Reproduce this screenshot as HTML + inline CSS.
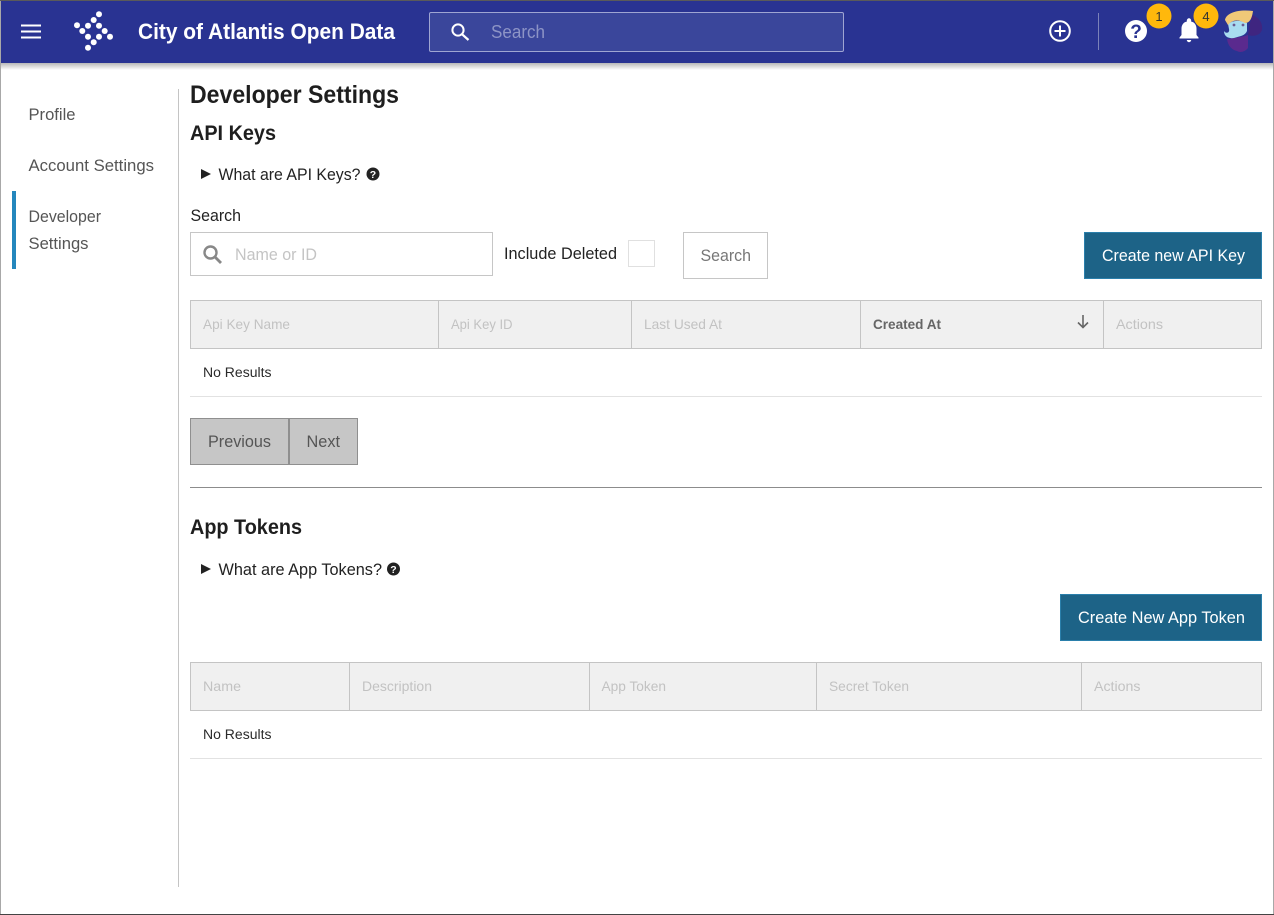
<!DOCTYPE html>
<html lang="en"><head><meta charset="utf-8"><title>Developer Settings</title>
<style>
html,body{margin:0;padding:0;background:#fff;width:1274px;height:915px;overflow:hidden}
svg{display:block}
text{font-family:"Liberation Sans",Arial,sans-serif}
.nav{font-size:17px;fill:#555}
.th{font-size:14px;fill:#c2c2c2}
.nr{font-size:13.5px;fill:#2a2a2a}
.b{font-weight:bold}
</style></head><body>
<svg width="1274" height="915" viewBox="0 0 1274 915" xmlns="http://www.w3.org/2000/svg">
<defs><linearGradient id="sh" x1="0" y1="0" x2="0" y2="1"><stop offset="0" stop-color="#000" stop-opacity=".28"/><stop offset="1" stop-color="#000" stop-opacity="0"/></linearGradient></defs>
<rect width="1274" height="915" fill="#fff"/>
<!-- page borders -->
<rect x="0" y="0" width="1" height="915" fill="#a8a8a8"/>
<rect x="1273" y="0" width="1" height="915" fill="#a8a8a8"/>
<rect x="0" y="914" width="1274" height="1" fill="#444"/>
<!-- header -->
<rect x="1" y="63" width="1272" height="7" fill="url(#sh)"/>
<rect x="1" y="1" width="1272" height="62" fill="#293392"/>
<rect x="0" y="0" width="1274" height="1" fill="#5a5a5a"/>
<g fill="#fff"><rect x="21" y="24.5" width="20" height="2"/><rect x="21" y="30.5" width="20" height="2"/><rect x="21" y="36.5" width="20" height="2"/></g>
<g fill="#fff"><circle cx="99" cy="14.3" r="3"/><circle cx="93.7" cy="20" r="3"/><circle cx="88" cy="25.7" r="3"/><circle cx="77" cy="25.3" r="3"/><circle cx="82.3" cy="31" r="3"/><circle cx="99" cy="25.7" r="3"/><circle cx="104.7" cy="31" r="3"/><circle cx="110" cy="36.7" r="3"/><circle cx="88" cy="36.7" r="3"/><circle cx="99" cy="36.7" r="3"/><circle cx="93.7" cy="42.3" r="3"/><circle cx="88" cy="47.7" r="3"/></g>
<text x="138" y="39" font-size="22" class="b" fill="#fff" textLength="257" lengthAdjust="spacingAndGlyphs">City of Atlantis Open Data</text>
<!-- search -->
<rect x="429.5" y="12.5" width="414" height="39" rx="1.5" fill="#3a469b" stroke="#9fa5d2"/>
<circle cx="458" cy="30" r="5.6" fill="none" stroke="#fff" stroke-width="2"/><path d="M462 34.2 L468.5 40" stroke="#fff" stroke-width="2.2" fill="none"/>
<text x="491" y="38" font-size="18" fill="#8d94c6" textLength="54" lengthAdjust="spacingAndGlyphs">Search</text>
<!-- right icons -->
<circle cx="1060" cy="31" r="9.8" fill="none" stroke="#fff" stroke-width="2"/><path d="M1060 25.5v11M1054.5 31h11" stroke="#fff" stroke-width="2" fill="none"/>
<rect x="1098" y="13" width="1" height="37" fill="#7b82b9"/>
<circle cx="1136" cy="31" r="11" fill="#fff"/>
<text x="1136" y="38" font-size="19" class="b" fill="#293392" text-anchor="middle">?</text>
<path d="M1179.5 37.5 L1181.5 35 V28.5 C1181.5 24.5 1184 22 1186.8 21.6 V20.5 a2.2 2.2 0 0 1 4.4 0 V21.6 C1194 22 1196.5 24.5 1196.5 28.5 V35 L1198.5 37.5 V38.5 H1179.5 Z" fill="#fff"/><path d="M1186.8 40 h4.4 a2.2 2.2 0 0 1 -4.4 0Z" fill="#fff"/>
<circle cx="1159" cy="16" r="12.5" fill="#ffb80c"/>
<text x="1159" y="21" font-size="13" fill="#333" text-anchor="middle">1</text>
<circle cx="1206" cy="16" r="12.5" fill="#ffb80c"/>
<text x="1206" y="21" font-size="13" fill="#333" text-anchor="middle">4</text>
<!-- avatar -->
<path d="M1252 15 C1258 17 1263 22 1262 30 C1260 35 1255 37 1248 35 L1250 23 Z" fill="#3f2580"/>
<path d="M1227 39 C1234 38 1242 37 1248 35 L1248 48 C1245 52 1240 53 1237 51 C1232 50 1228 46 1227 39Z" fill="#5a2a8e"/>
<path d="M1228 24 C1233 20 1240 20 1247 23 L1247 31 C1245 36 1240 36 1234 38 C1228 39 1224 36 1224 31 C1226 34 1230 33 1229 29 Z" fill="#a8dcf0"/>
<path d="M1225 20 C1226 13 1238 9 1253 11 C1252 18 1250 23 1245 23 C1238 19 1232 20 1228 25Z" fill="#f0c878"/>
<circle cx="1234" cy="25" r="1.4" fill="#6a5a90"/><circle cx="1243" cy="25" r="1.4" fill="#6a5a90"/>
<!-- sidebar -->
<rect x="178" y="89" width="1" height="798" fill="#c4c4c4"/>
<rect x="12" y="191" width="4" height="78" fill="#2487bd"/>
<text x="28.5" y="120" class="nav" textLength="47" lengthAdjust="spacingAndGlyphs">Profile</text>
<text x="28.5" y="171" class="nav" textLength="125.5" lengthAdjust="spacingAndGlyphs">Account Settings</text>
<text x="28.5" y="222" class="nav" textLength="72.5" lengthAdjust="spacingAndGlyphs">Developer</text>
<text x="28.5" y="249" class="nav" textLength="60" lengthAdjust="spacingAndGlyphs">Settings</text>
<!-- headings -->
<text x="190" y="103" font-size="25" class="b" fill="#1e1e1e" textLength="209" lengthAdjust="spacingAndGlyphs">Developer Settings</text>
<text x="190" y="140" font-size="21" class="b" fill="#1e1e1e" textLength="86" lengthAdjust="spacingAndGlyphs">API Keys</text>
<path d="M201 169 L211 174 L201 179 Z" fill="#222"/>
<text x="218.5" y="180" font-size="16.5" fill="#222" textLength="142" lengthAdjust="spacingAndGlyphs">What are API Keys?</text>
<circle cx="373" cy="174" r="6.5" fill="#222"/>
<text x="373" y="178" font-size="10.5" class="b" fill="#fff" text-anchor="middle">?</text>
<text x="190.5" y="221" font-size="16.5" fill="#222" textLength="50.5" lengthAdjust="spacingAndGlyphs">Search</text>
<!-- search row -->
<rect x="190.5" y="232.5" width="302" height="43" fill="#fff" stroke="#c6c6c6"/>
<circle cx="210.5" cy="252.5" r="6" fill="none" stroke="#888" stroke-width="2.4"/><path d="M215 257 L221 263" stroke="#888" stroke-width="2.8"/>
<text x="235" y="260" font-size="17" fill="#c4c4c4" textLength="82" lengthAdjust="spacingAndGlyphs">Name or ID</text>
<text x="504" y="259" font-size="16.5" fill="#222" textLength="113" lengthAdjust="spacingAndGlyphs">Include Deleted</text>
<rect x="628.5" y="240.5" width="26" height="26" fill="#fff" stroke="#e0e0e0"/>
<rect x="683.5" y="232.5" width="84" height="46" fill="#fff" stroke="#c6c6c6"/>
<text x="700.5" y="261" font-size="16.5" fill="#777" textLength="50.5" lengthAdjust="spacingAndGlyphs">Search</text>
<rect x="1084.5" y="232.5" width="177" height="46" fill="#1d6387" stroke="#2a7fab"/>
<text x="1102" y="261" font-size="16.5" fill="#fff" textLength="143" lengthAdjust="spacingAndGlyphs">Create new API Key</text>
<!-- table 1 -->
<rect x="190.5" y="300.5" width="1071" height="48" fill="#f0f0f0" stroke="#c4c4c4"/>
<path d="M438.5 300v49M631.5 300v49M860.5 300v49M1103.5 300v49" stroke="#c4c4c4" fill="none"/>
<text x="203" y="329" class="th" textLength="87" lengthAdjust="spacingAndGlyphs">Api Key Name</text>
<text x="451" y="329" class="th" textLength="61.5" lengthAdjust="spacingAndGlyphs">Api Key ID</text>
<text x="644" y="329" class="th" textLength="78" lengthAdjust="spacingAndGlyphs">Last Used At</text>
<text x="873" y="329" font-size="14" class="b" fill="#666" textLength="68" lengthAdjust="spacingAndGlyphs">Created At</text>
<path d="M1083 315v12M1078 322.5l5 5 5-5" stroke="#666" stroke-width="1.6" fill="none"/>
<text x="1116" y="329" class="th" textLength="47" lengthAdjust="spacingAndGlyphs">Actions</text>
<text x="203" y="377" class="nr" textLength="68.5" lengthAdjust="spacingAndGlyphs">No Results</text>
<rect x="190" y="396" width="1072" height="1" fill="#e2e2e2"/>
<!-- pagination -->
<rect x="190.5" y="418.5" width="98" height="46" fill="#c6c6c6" stroke="#8f8f8f"/>
<rect x="289.5" y="418.5" width="68" height="46" fill="#c6c6c6" stroke="#8f8f8f"/>
<text x="208" y="447" font-size="16.5" fill="#555" textLength="63" lengthAdjust="spacingAndGlyphs">Previous</text>
<text x="306.5" y="447" font-size="16.5" fill="#555" textLength="33.5" lengthAdjust="spacingAndGlyphs">Next</text>
<rect x="190" y="487" width="1072" height="1" fill="#8c8c8c"/>
<!-- app tokens -->
<text x="190" y="534" font-size="21" class="b" fill="#1e1e1e" textLength="112" lengthAdjust="spacingAndGlyphs">App Tokens</text>
<path d="M201 564 L211 569 L201 574 Z" fill="#222"/>
<text x="218.5" y="575" font-size="16.5" fill="#222" textLength="163.5" lengthAdjust="spacingAndGlyphs">What are App Tokens?</text>
<circle cx="393.5" cy="569" r="6.5" fill="#222"/>
<text x="393.5" y="573" font-size="10.5" class="b" fill="#fff" text-anchor="middle">?</text>
<rect x="1060.5" y="594.5" width="201" height="46" fill="#1d6387" stroke="#2a7fab"/>
<text x="1078" y="623" font-size="16.5" fill="#fff" textLength="167" lengthAdjust="spacingAndGlyphs">Create New App Token</text>
<!-- table 2 -->
<rect x="190.5" y="662.5" width="1071" height="48" fill="#f0f0f0" stroke="#c4c4c4"/>
<path d="M349.5 662v49M589.5 662v49M816.5 662v49M1081.5 662v49" stroke="#c4c4c4" fill="none"/>
<text x="203" y="691" class="th" textLength="38" lengthAdjust="spacingAndGlyphs">Name</text>
<text x="362" y="691" class="th" textLength="70" lengthAdjust="spacingAndGlyphs">Description</text>
<text x="601.5" y="691" class="th" textLength="64.5" lengthAdjust="spacingAndGlyphs">App Token</text>
<text x="829" y="691" class="th" textLength="80" lengthAdjust="spacingAndGlyphs">Secret Token</text>
<text x="1094" y="691" class="th" textLength="46.5" lengthAdjust="spacingAndGlyphs">Actions</text>
<text x="203" y="739" class="nr" textLength="68.5" lengthAdjust="spacingAndGlyphs">No Results</text>
<rect x="190" y="758" width="1072" height="1" fill="#e2e2e2"/>
</svg>
</body></html>
